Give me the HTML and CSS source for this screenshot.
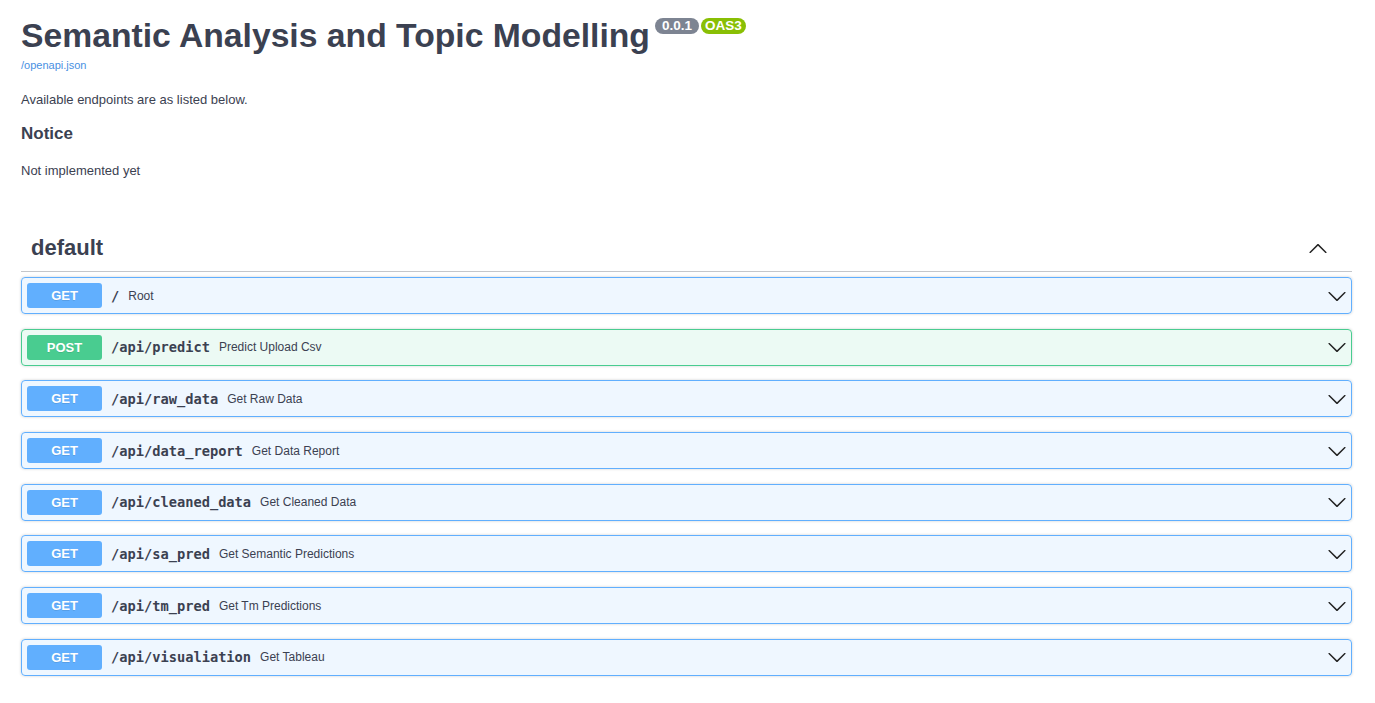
FILE: index.html
```html
<!DOCTYPE html>
<html lang="en">
<head>
<meta charset="utf-8">
<title>Semantic Analysis and Topic Modelling - Swagger UI</title>
<link rel="stylesheet" href="styles.css">
</head>
<body>
<div class="wrapper">
  <section class="info">
    <h2 class="title">
      <span class="title-text">Semantic Analysis and Topic Modelling</span>
      <small class="badge badge-version"><pre>0.0.1</pre></small>
      <small class="badge badge-oas"><pre>OAS3</pre></small>
    </h2>
    <a class="spec-link" href="#">/openapi.json</a>
    <div class="description">
      <p class="desc-p">Available endpoints are as listed below.</p>
      <h4 class="desc-h">Notice</h4>
      <p class="desc-p desc-last">Not implemented yet</p>
    </div>
  </section>

  <section class="tag-section">
    <h3 class="tag">
      <span class="tag-name">default</span>
      <svg class="arrow-up" viewBox="0 0 20 20" width="20" height="20"><path d="M17.418 14.908c.272.268.709.268.979 0s.271-.701 0-.969l-7.908-7.83c-.27-.268-.707-.268-.979 0l-7.908 7.83c-.27.268-.27.701 0 .969.271.268.709.268.979 0L10 7.767l7.418 7.141z"/></svg>
    </h3>

    <div class="ops">
      <div class="op op-get">
        <span class="method">GET</span>
        <span class="path">/</span>
        <span class="summary">Root</span>
        <svg class="arrow-down" viewBox="0 0 20 20" width="20" height="20"><path d="M17.418 6.109c.272-.268.709-.268.979 0s.271.701 0 .969l-7.908 7.83c-.27.268-.707.268-.979 0l-7.908-7.83c-.27-.268-.27-.701 0-.969.271-.268.709-.268.979 0L10 13.25l7.418-7.141z"/></svg>
      </div>
      <div class="op op-post">
        <span class="method">POST</span>
        <span class="path">/api/predict</span>
        <span class="summary">Predict Upload Csv</span>
        <svg class="arrow-down" viewBox="0 0 20 20" width="20" height="20"><path d="M17.418 6.109c.272-.268.709-.268.979 0s.271.701 0 .969l-7.908 7.83c-.27.268-.707.268-.979 0l-7.908-7.83c-.27-.268-.27-.701 0-.969.271-.268.709-.268.979 0L10 13.25l7.418-7.141z"/></svg>
      </div>
      <div class="op op-get">
        <span class="method">GET</span>
        <span class="path">/api/raw_data</span>
        <span class="summary">Get Raw Data</span>
        <svg class="arrow-down" viewBox="0 0 20 20" width="20" height="20"><path d="M17.418 6.109c.272-.268.709-.268.979 0s.271.701 0 .969l-7.908 7.83c-.27.268-.707.268-.979 0l-7.908-7.83c-.27-.268-.27-.701 0-.969.271-.268.709-.268.979 0L10 13.25l7.418-7.141z"/></svg>
      </div>
      <div class="op op-get">
        <span class="method">GET</span>
        <span class="path">/api/data_report</span>
        <span class="summary">Get Data Report</span>
        <svg class="arrow-down" viewBox="0 0 20 20" width="20" height="20"><path d="M17.418 6.109c.272-.268.709-.268.979 0s.271.701 0 .969l-7.908 7.83c-.27.268-.707.268-.979 0l-7.908-7.83c-.27-.268-.27-.701 0-.969.271-.268.709-.268.979 0L10 13.25l7.418-7.141z"/></svg>
      </div>
      <div class="op op-get">
        <span class="method">GET</span>
        <span class="path">/api/cleaned_data</span>
        <span class="summary">Get Cleaned Data</span>
        <svg class="arrow-down" viewBox="0 0 20 20" width="20" height="20"><path d="M17.418 6.109c.272-.268.709-.268.979 0s.271.701 0 .969l-7.908 7.83c-.27.268-.707.268-.979 0l-7.908-7.83c-.27-.268-.27-.701 0-.969.271-.268.709-.268.979 0L10 13.25l7.418-7.141z"/></svg>
      </div>
      <div class="op op-get">
        <span class="method">GET</span>
        <span class="path">/api/sa_pred</span>
        <span class="summary">Get Semantic Predictions</span>
        <svg class="arrow-down" viewBox="0 0 20 20" width="20" height="20"><path d="M17.418 6.109c.272-.268.709-.268.979 0s.271.701 0 .969l-7.908 7.83c-.27.268-.707.268-.979 0l-7.908-7.83c-.27-.268-.27-.701 0-.969.271-.268.709-.268.979 0L10 13.25l7.418-7.141z"/></svg>
      </div>
      <div class="op op-get">
        <span class="method">GET</span>
        <span class="path">/api/tm_pred</span>
        <span class="summary">Get Tm Predictions</span>
        <svg class="arrow-down" viewBox="0 0 20 20" width="20" height="20"><path d="M17.418 6.109c.272-.268.709-.268.979 0s.271.701 0 .969l-7.908 7.83c-.27.268-.707.268-.979 0l-7.908-7.83c-.27-.268-.27-.701 0-.969.271-.268.709-.268.979 0L10 13.25l7.418-7.141z"/></svg>
      </div>
      <div class="op op-get">
        <span class="method">GET</span>
        <span class="path">/api/visualiation</span>
        <span class="summary">Get Tableau</span>
        <svg class="arrow-down" viewBox="0 0 20 20" width="20" height="20"><path d="M17.418 6.109c.272-.268.709-.268.979 0s.271.701 0 .969l-7.908 7.83c-.27.268-.707.268-.979 0l-7.908-7.83c-.27-.268-.27-.701 0-.969.271-.268.709-.268.979 0L10 13.25l7.418-7.141z"/></svg>
      </div>
    </div>
  </section>
</div>
</body>
</html>
```

FILE: styles.css
```css
* {
  box-sizing: border-box;
}

html, body {
  margin: 0;
  padding: 0;
  background: #fff;
}

body {
  font-family: "Liberation Sans", Arial, sans-serif;
  color: #3b4151;
}

.wrapper {
  padding: 0 23px 0 21px;
}

/* ---------- info ---------- */
.info {
  display: flex;
  flex-direction: column;
  align-items: flex-start;
}

.title {
  display: flex;
  align-items: flex-start;
  margin: 15px 0 0;
  font-size: 33.7px;
  line-height: 41px;
  font-weight: 700;
  color: #3b4151;
}

.badge {
  display: inline-block;
  margin: 3px 0 0 5px;
  padding: 2px 4px;
  border-radius: 57px;
  background: #7d8492;
}

.badge + .badge {
  margin-left: 2px;
}

.badge-oas {
  background: #89bf04;
}

.badge pre {
  margin: 0;
  padding: 0;
  min-width: 36px;
  text-align: center;
  font-family: "Liberation Sans", Arial, sans-serif;
  font-size: 13.5px;
  line-height: 12px;
  font-weight: 700;
  color: #fff;
}

.spec-link {
  display: block;
  margin-top: 3px;
  font-size: 11px;
  line-height: 13px;
  color: #4990e2;
  text-decoration: none;
}

.description {
  margin-top: 21px;
}

.desc-p {
  margin: 0;
  font-size: 13px;
  line-height: 14px;
}

.desc-h {
  margin: 17px 0 20px;
  font-size: 17px;
  line-height: 20px;
  font-weight: 700;
}

/* ---------- tag section ---------- */
.tag-section {
  margin-top: 47px;
}

.tag {
  display: flex;
  align-items: center;
  justify-content: space-between;
  margin: 0 0 5px;
  padding: 10px 24px 11px 10px;
  border-bottom: 1px solid rgba(59, 65, 81, 0.3);
  font-size: 22px;
  line-height: 25px;
  font-weight: 700;
  color: #3b4151;
}

.arrow-up,
.arrow-down {
  flex: none;
  fill: #222;
}

/* ---------- operations ---------- */
.ops {
  display: flex;
  flex-direction: column;
}

.op {
  display: flex;
  align-items: center;
  height: 37px;
  margin-bottom: 14.7px;
  padding: 0 4px 0 5px;
  border: 1px solid #61affe;
  border-radius: 4px;
  background: rgba(97, 175, 254, 0.1);
  box-shadow: 0 0 3px rgba(0, 0, 0, 0.19);
}

.op-post {
  border-color: #49cc90;
  background: rgba(73, 204, 144, 0.1);
}

.method {
  flex: none;
  width: 75px;
  height: 25px;
  border-radius: 3px;
  background: #61affe;
  color: #fff;
  font-size: 13px;
  line-height: 25px;
  font-weight: 700;
  text-align: center;
  text-shadow: 0 1px 0 rgba(0, 0, 0, 0.1);
}

.op-post .method {
  background: #49cc90;
}

.path {
  padding: 0 9px;
  font-family: "DejaVu Sans Mono", "Liberation Mono", monospace;
  font-size: 13.7px;
  font-weight: 700;
  color: #3b4151;
}

.summary {
  flex: 1;
  font-size: 12px;
  color: #3b4151;
}
```
